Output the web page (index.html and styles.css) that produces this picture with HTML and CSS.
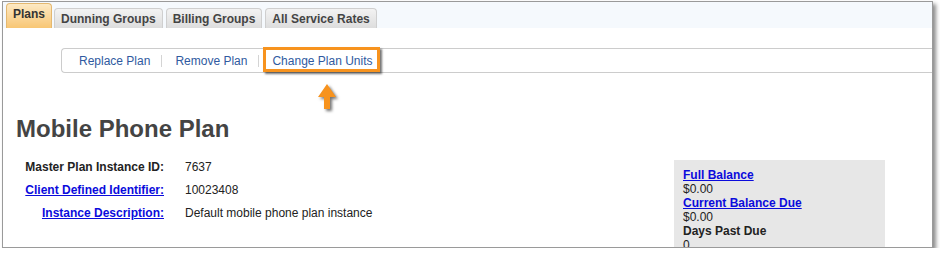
FILE: index.html
```html
<!DOCTYPE html>
<html>
<head>
<meta charset="utf-8">
<link rel="stylesheet" href="styles.css">
</head>
<body>
<div class="window">
  <div class="tabs">
    <span class="tab active">Plans</span>
    <span class="tab">Dunning Groups</span>
    <span class="tab">Billing Groups</span>
    <span class="tab">All Service Rates</span>
  </div>
  <div class="submenu">
    <a class="item first">Replace Plan</a>
    <a class="item">Remove Plan</a>
    <a class="item">Change Plan Units</a>
    <span class="callout"></span>
  </div>
  <svg class="arrow" width="24" height="32" viewBox="0 0 24 32">
    <path d="M9 0 L18 13 L12 13 L12 25 L6 25 L6 13 L0 13 Z" fill="#f7931e"/>
  </svg>
  <div class="main">
    <div class="left">
      <h1 class="title">Mobile Phone Plan</h1>
      <div class="fields">
        <span class="label">Master Plan Instance ID:</span>
        <span class="value">7637</span>
        <a class="label link">Client Defined Identifier:</a>
        <span class="value">10023408</span>
        <a class="label link">Instance Description:</a>
        <span class="value">Default mobile phone plan instance</span>
      </div>
    </div>
    <div class="balance">
      <a class="link bold">Full Balance</a>
      <div>$0.00</div>
      <a class="link bold">Current Balance Due</a>
      <div>$0.00</div>
      <div class="bold">Days Past Due</div>
      <div>0</div>
    </div>
  </div>
</div>
</body>
</html>
```

FILE: styles.css
```css
* { box-sizing: border-box; }
html, body { margin: 0; padding: 0; background: #fff; }
body { font-family: "Liberation Sans", Arial, sans-serif; font-size: 12px; color: #222; }

.window {
  position: relative;
  margin: 1px 0 0 2px;
  width: 931px;
  height: 247px;
  border: 1px solid #9a9a9a;
  box-shadow: 3px 3px 4px rgba(0,0,0,0.45);
  overflow: hidden;
  background: #fff;
}

.tabs {
  display: flex;
  align-items: flex-end;
  height: 26px;
  padding-left: 3px;
  background: #f5f9fd;
}
.tab {
  display: flex;
  align-items: center;
  height: 20px;
  padding: 1px 6px 0 6px;
  margin-right: 3px;
  font-weight: bold;
  font-size: 12px;
  color: #444;
  border: 1px solid #cfcfcf;
  border-bottom: none;
  border-radius: 4px 4px 0 0;
  background: linear-gradient(#f3f3f3, #dddddd);
}
.tab.active {
  height: 25px;
  align-items: flex-start;
  padding: 3px 6px 0 6px;
  margin-right: 2px;
  color: #333;
  border-color: #e4b870;
  background: linear-gradient(#fde9c4, #f8c674);
}

.submenu {
  position: relative;
  display: flex;
  align-items: center;
  height: 25px;
  margin: 20px 0 0 58px;
  border: 1px solid #cccccc;
  border-right: none;
  border-radius: 4px 0 0 4px;
}
.item {
  padding: 0 11px 0 13px;
  border-left: 1px solid #d4d4d4;
  line-height: 12px;
  color: #2f5aa0;
  font-size: 12px;
}
.item.first { border-left: none; padding-left: 17px; }
.callout {
  position: absolute;
  left: 201px;
  top: -2px;
  width: 117px;
  height: 25px;
  border: 3px solid #f7931e;
  box-shadow: 2px 2px 2px rgba(0,0,0,0.55);
}

.arrow {
  position: absolute;
  left: 315px;
  top: 82px;
  filter: drop-shadow(2px 2px 1.5px rgba(0,0,0,0.55));
}

.main {
  display: flex;
  align-items: flex-start;
}
.left { padding-left: 13px; }
.title {
  margin: 42px 0 0 0;
  font-size: 24px;
  line-height: 28px;
  font-weight: bold;
  color: #444;
}
.fields {
  display: grid;
  grid-template-columns: 148px auto;
  column-gap: 21px;
  grid-auto-rows: 23px;
  align-items: center;
  margin-top: 12px;
}
.label { text-align: right; font-weight: bold; color: #222; }
.link { color: #0b0bdc; text-decoration: underline; }
.label.link { color: #0b0bdc; }
.value { color: #222; padding-top: 1px; }

.balance {
  margin: 87px 47px 0 auto;
  width: 211px;
  height: 120px;
  padding: 8px 9px;
  background: #e7e7e7;
  line-height: 14px;
  display: flex;
  flex-direction: column;
  align-items: flex-start;
}
.bold { font-weight: bold; }
```
